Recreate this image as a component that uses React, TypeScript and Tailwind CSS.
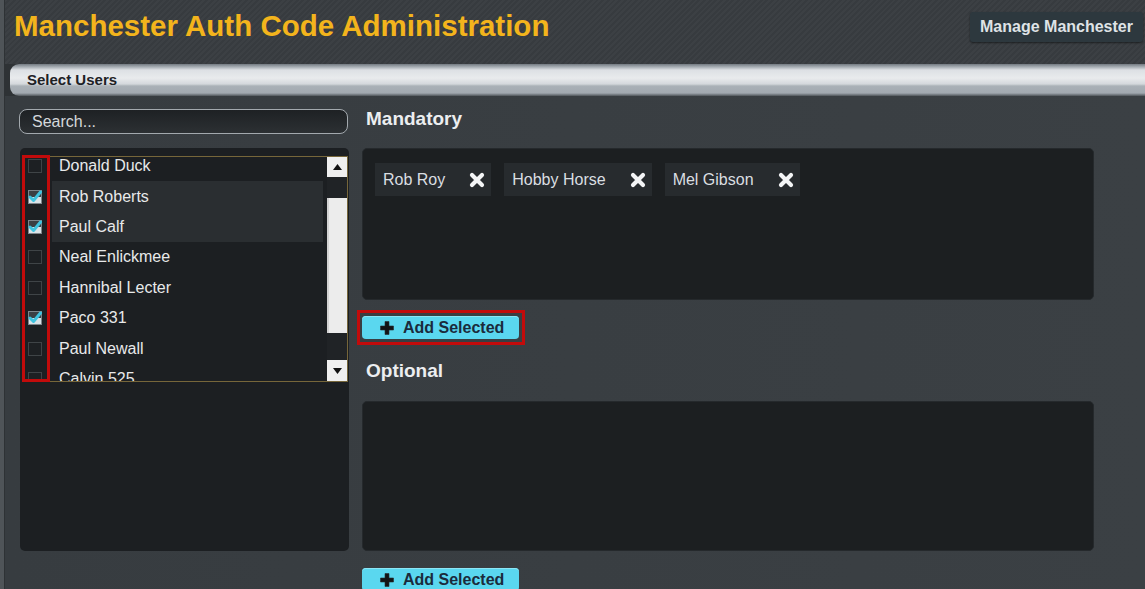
import React from "react";

type User = { name: string; checked: boolean; selected: boolean };

const users: User[] = [
  { name: "Donald Duck", checked: false, selected: false },
  { name: "Rob Roberts", checked: true, selected: true },
  { name: "Paul Calf", checked: true, selected: true },
  { name: "Neal Enlickmee", checked: false, selected: false },
  { name: "Hannibal Lecter", checked: false, selected: false },
  { name: "Paco 331", checked: true, selected: false },
  { name: "Paul Newall", checked: false, selected: false },
  { name: "Calvin 525", checked: false, selected: false },
];

const mandatory = ["Rob Roy", "Hobby Horse", "Mel Gibson"];

function CheckBox({ checked }: { checked: boolean }) {
  return (
    <svg width="14" height="14" viewBox="0 0 14 14" className="shrink-0">
      <rect x="0.5" y="0.5" width="13" height="13" fill={checked ? "#d9e2e6" : "#1d2023"} stroke={checked ? "#7d868c" : "#3f4447"} />
      {checked && <rect x="1" y="1" width="12" height="6" fill="#3a4044" />}
      {checked && (
        <path d="M2 7 L5.5 10.5 L12.5 2" fill="none" stroke="#3fc3df" strokeWidth="3" strokeLinecap="round" strokeLinejoin="round" />
      )}
    </svg>
  );
}

function CloseIcon() {
  return (
    <svg width="16" height="16" viewBox="0 0 16 16" className="shrink-0">
      <path d="M3 3 L13 13 M13 3 L3 13" stroke="#f4f5f6" strokeWidth="4.2" strokeLinecap="round" />
    </svg>
  );
}

function PlusIcon() {
  return (
    <svg width="14" height="14" viewBox="0 0 14 14" className="shrink-0">
      <path d="M5 0.5h4v4.5h4.5v4H9v4.5H5V9H0.5V5H5z" fill="#121416" stroke="#2a2e31" strokeWidth="0.6" strokeLinejoin="round" />
    </svg>
  );
}

function Arrow({ up }: { up: boolean }) {
  return (
    <svg width="9" height="6" viewBox="0 0 9 6">
      <path d={up ? "M0 6 L4.5 0 L9 6 Z" : "M0 0 L4.5 6 L9 0 Z"} fill="#111" />
    </svg>
  );
}

function AddSelected({ marked }: { marked?: boolean }) {
  return (
    <div className="relative w-[157px]">
      <button className="flex h-[23px] w-[157px] items-center gap-[9px] rounded-[4px] bg-[#5ad7ef] pl-[18px] text-[16px] font-bold leading-none text-[#1a2b3c] shadow-[inset_0_1px_0_#8be6f6]">
        <PlusIcon />
        <span>Add Selected</span>
      </button>
      {marked && (
        <div className="pointer-events-none absolute left-[-5px] top-[-6px] h-[35px] w-[168px] border-[3px] border-[#c20b0b]" />
      )}
    </div>
  );
}

export default function App() {
  return (
    <div className="flex h-[589px] w-[1145px] overflow-hidden bg-[#393e42] font-['Liberation_Sans',Arial,sans-serif]">
      <div className="w-[5px] shrink-0 border-r border-[#2e3235] bg-[#4f5458]" />
      <div className="flex min-w-0 flex-1 flex-col">
        {/* Title bar */}
        <header className="flex h-[64px] shrink-0 items-start justify-between bg-[repeating-linear-gradient(135deg,#3c4044_0px,#3c4044_2px,#373b3f_2px,#373b3f_4px)] pl-[9px]">
          <h1 className="pt-[8px] text-[29.5px] font-bold leading-[36px] text-[#f3b41c]">
            Manchester Auth Code Administration
          </h1>
          <button className="mr-[2px] mt-[12px] flex h-[30px] w-[173px] items-center justify-center rounded-[3px] bg-[#2d383e] text-[16px] font-bold text-[#dfe3e6] shadow-[0_1px_2px_rgba(0,0,0,0.5)]">
            Manage Manchester
          </button>
        </header>

        {/* Section strip */}
        <div className="h-[32px] shrink-0 bg-[#2e3235] pl-[5px]">
          <div className="flex h-[32px] items-center rounded-l-[9px] bg-[linear-gradient(to_bottom,#737a81_0px,#a7aeb4_3px,#dde0e4_6px,#e9ebed_14px,#d4d8dc_20px,#aab1b7_22px,#a2a9b0_29px,#50565b_32px)] pl-[17px]">
            <span className="text-[15px] font-bold text-[#1d2125]">Select Users</span>
          </div>
        </div>

        {/* Body */}
        <div className="flex flex-1 bg-[linear-gradient(to_right,#373c40,#3b4044)]">
          {/* User picker */}
          <div className="w-[344px] shrink-0 pl-[14px] pt-[13px]">
            <div className="flex h-[25px] w-[329px] items-center rounded-[8px] border border-[#a3a9ae] bg-[linear-gradient(to_bottom,#1e2124,#2c3033)] pl-[12px] text-[16px] text-[#d4d8db]">
              Search...
            </div>
            <div className="ml-[1px] mt-[14px] h-[403px] w-[329px] rounded-[5px] bg-[#1c1f22] pl-[2px] pt-[8px]">
              <div className="relative flex h-[226px] w-[326px] border border-[#76663a]">
                <div className="h-full w-[304px] overflow-hidden">
                  <div className="mt-[-6px]">
                    {users.map((u) => (
                      <div key={u.name} className="flex h-[30.4px] items-center">
                        <div className="flex w-[29px] shrink-0 items-center pl-[5px]">
                          <CheckBox checked={u.checked} />
                        </div>
                        <div
                          className={`flex h-full w-[271px] items-center pl-[7px] text-[16px] text-[#e8e9ea] ${
                            u.selected ? "bg-[#2a2e31]" : ""
                          }`}
                        >
                          {u.name}
                        </div>
                      </div>
                    ))}
                  </div>
                </div>
                {/* Scrollbar */}
                <div className="flex h-full w-[20px] flex-col bg-[#202326]">
                  <div className="flex h-[20px] items-center justify-center bg-[#efefef]">
                    <Arrow up />
                  </div>
                  <div className="h-[21px]" />
                  <div className="h-[135px] border-l-2 border-[#d3d3d3] bg-[#ececec]" />
                  <div className="flex-1" />
                  <div className="flex h-[21px] items-center justify-center bg-[#efefef]">
                    <Arrow up={false} />
                  </div>
                </div>
                <div className="pointer-events-none absolute left-[-1px] top-[-2px] h-[227px] w-[28px] border-[3px] border-[#c20b0b]" />
              </div>
            </div>
          </div>

          {/* Assigned users */}
          <div className="ml-[13px] w-[732px] shrink-0">
            <h2 className="pl-[4px] pt-[12px] text-[19px] font-bold leading-[22px] text-[#eceef0]">Mandatory</h2>
            <div className="mt-[18px] flex h-[152px] items-start gap-[13px] rounded-[5px] border border-[#25292c] bg-[#1c1f21] pl-[12px] pt-[14px]">
              {mandatory.map((name) => (
                <div key={name} className="flex h-[33px] items-center gap-[24px] bg-[#272b2e] pl-[8px] pr-[6px] text-[16px] text-[#dadee1]">
                  <span>{name}</span>
                  <CloseIcon />
                </div>
              ))}
            </div>
            <div className="mt-[16px]">
              <AddSelected marked />
            </div>
            <h2 className="mt-[21px] pl-[4px] text-[19px] font-bold leading-[22px] text-[#eceef0]">Optional</h2>
            <div className="mt-[19px] h-[150px] rounded-[5px] border border-[#25292c] bg-[#1c1f21]" />
            <div className="mt-[17px]">
              <AddSelected />
            </div>
          </div>
        </div>
      </div>
    </div>
  );
}
